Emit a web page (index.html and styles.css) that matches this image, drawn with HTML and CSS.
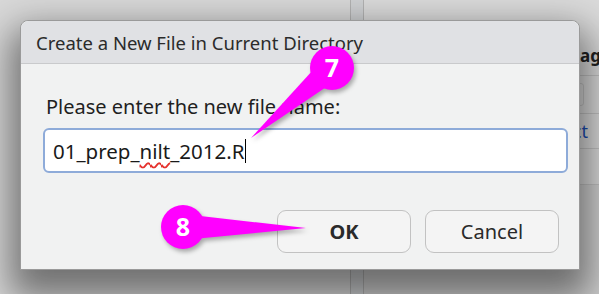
FILE: index.html
```html
<!DOCTYPE html>
<html lang="en">
<head>
    <meta charset="UTF-8">
    <meta name="viewport" content="width=device-width, initial-scale=1.0">
    <title>Create a New File</title>
    <link rel="stylesheet" href="styles.css">
</head>
<body>
    <!-- app behind the modal -->
    <div class="app">
        <div class="left-pane"></div>
        <div class="splitter"></div>
        <div class="right-pane">
            <div class="pane-top"></div>
            <div class="pane-head">Packages</div>
            <div class="pane-row"><span class="pane-box"></span></div>
            <div class="pane-row link-row"><a class="pane-link">Select</a></div>
            <div class="pane-row short"></div>
            <div class="pane-rest"></div>
        </div>
    </div>

    <div class="dialog">
        <div class="dialog-title">Create a New File in Current Directory</div>
        <div class="dialog-body">
            <div class="prompt">Please enter the new file name:</div>
            <div class="name-field">01_prep_<span class="typo">nilt</span>_2012.R<span class="caret"></span></div>
            <div class="buttons">
                <button class="btn btn-ok">OK</button>
                <button class="btn">Cancel</button>
            </div>
        </div>
    </div>

    <!-- step markers -->
    <svg class="marks" width="599" height="294" viewBox="0 0 599 294">
        <g class="mark">
            <polygon points="323,59 341,77 251,138"/>
            <circle cx="332" cy="68" r="22"/>
        </g>
        <text x="332" y="77" class="mark-num">7</text>
        <g class="mark">
            <polygon points="183,214 183,240 306,228"/>
            <circle cx="183" cy="227" r="22"/>
        </g>
        <text x="183" y="236" class="mark-num">8</text>
    </svg>
</body>
</html>
```
FILE: styles.css
```css
body {
    margin: 0;
    width: 599px;
    height: 294px;
    overflow: hidden;
    font-family: 'Noto Sans', sans-serif;
    background-color: #d8d8d8;
    position: relative;
}

.app {
    display: flex;
    height: 294px;
}

.left-pane {
    width: 350px;
    flex-shrink: 0;
    background-color: #d8d8d8;
}

.splitter {
    width: 12px;
    flex-shrink: 0;
    background-color: #cfd1d3;
    border-left: 1px solid #b2b2b2;
    border-right: 1px solid #b2b2b2;
}

.right-pane {
    flex: 1;
    min-width: 0;
    overflow: hidden;
    display: flex;
    flex-direction: column;
    background-color: #dadada;
}

.pane-top {
    height: 44px;
}

.pane-head {
    height: 31px;
    padding-left: 176px;
    white-space: nowrap;
    font-weight: bold;
    font-size: 17px;
    color: #222;
    border-bottom: 1px solid #c2c2c2;
}

.pane-row {
    height: 37px;
    border-bottom: 1px solid #c2c2c2;
    display: flex;
    align-items: center;
}

.pane-box {
    margin-left: 200px;
    width: 18px;
    height: 21px;
    border: 1px solid #c4c4c4;
    border-radius: 3px;
}

.link-row {
    height: 34px;
}

.pane-link {
    padding-left: 174px;
    white-space: nowrap;
    color: #1a4bb0;
    font-size: 18px;
}

.pane-row.short {
    height: 35px;
}

.pane-rest {
    flex: 1;
    background-color: #d0d0d0;
}

/* modal */
.dialog {
    position: absolute;
    left: 20px;
    top: 20px;
    width: 558px;
    height: 248px;
    border: 1px solid #9a9a9a;
    border-radius: 8px 8px 0 0;
    background-color: #f1f2f2;
    box-shadow: 0 18px 36px 10px rgba(0, 0, 0, 0.48);
    display: flex;
    flex-direction: column;
}

.dialog-title {
    height: 42px;
    padding-left: 15px;
    display: flex;
    align-items: center;
    background-color: #e0e1e4;
    border-bottom: 1px solid #c9cacc;
    border-radius: 8px 8px 0 0;
    font-size: 18.5px;
    color: #2b2b2b;
}

.dialog-body {
    padding: 30px 11px 0 22px;
    color: #1f1f1f;
}

.prompt {
    padding-left: 3px;
    font-size: 20px;
    line-height: 26px;
}

.name-field {
    margin-top: 8px;
    height: 41px;
    padding-left: 8px;
    border: 2px solid #8eabd9;
    border-radius: 6px;
    background-color: #fff;
    display: flex;
    align-items: center;
    font-size: 20.5px;
    color: #1a1a1a;
}

.typo {
    text-decoration: underline wavy #e5322d;
    text-underline-offset: 3px;
    text-decoration-thickness: 1.5px;
}

.caret {
    width: 1px;
    height: 24px;
    margin-left: 1px;
    background-color: #000;
}

.buttons {
    margin-top: 37px;
    margin-right: 9px;
    display: flex;
    justify-content: flex-end;
    gap: 14px;
}

.btn {
    width: 134px;
    height: 43px;
    border: 1px solid #c2c2c2;
    border-radius: 9px;
    background-color: #f4f4f4;
    font-family: 'Noto Sans', sans-serif;
    font-size: 20px;
    color: #2a2a2a;
}

.btn-ok {
    font-weight: bold;
}

/* annotations */
.marks {
    position: absolute;
    left: 0;
    top: 0;
    pointer-events: none;
}

.mark {
    fill: #ff00ff;
    filter: drop-shadow(2px 3px 2px rgba(0, 0, 0, 0.3));
}

.mark-num {
    fill: #fff;
    font-family: 'Noto Sans', sans-serif;
    font-weight: bold;
    font-size: 25px;
    text-anchor: middle;
}
```
